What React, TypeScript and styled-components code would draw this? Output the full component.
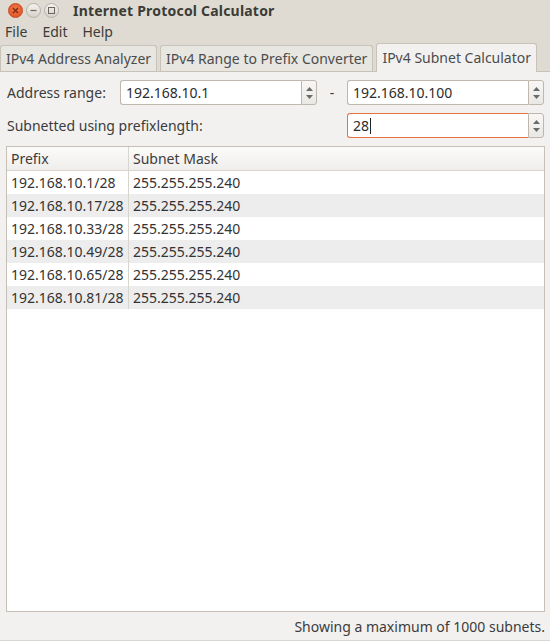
import React from "react";
import styled, { createGlobalStyle } from "styled-components";

const Global = createGlobalStyle`
  html, body { margin: 0; padding: 0; }
  body {
    width: 550px; height: 641px; overflow: hidden;
    font-family: "Noto Sans", "DejaVu Sans", sans-serif;
    font-size: 13px; color: #3c3c3c; background: #f2f1f0;
  }
  * { box-sizing: border-box; }
`;

const Window = styled.div`
  width: 550px; height: 641px; display: flex; flex-direction: column;
  background: #f2f1f0; border-bottom: 1px solid #dad7d2;
`;

const TitleBar = styled.div`
  height: 20px; display: flex; align-items: center; padding-left: 8px;
  background: #dfdbd2;
`;

const WinButtons = styled.div`
  display: flex; gap: 3px; align-items: center; width: 65px;
`;

const WinBtn = styled.div<{ $close?: boolean }>`
  width: 15px; height: 15px; border-radius: 50%;
  display: flex; align-items: center; justify-content: center;
  background: ${(p) => (p.$close ? "radial-gradient(circle at 50% 40%, #f47a4e, #dd4a1d)" : "linear-gradient(#f4f2ee, #d6d2ca)")};
  border: 1px solid ${(p) => (p.$close ? "#c24a22" : "#b7b1a7")};
`;

const Title = styled.div`
  font-weight: bold; font-size: 14px; color: #3c3b37; letter-spacing: 0.2px;
`;

const MenuBar = styled.div`
  height: 23px; display: flex; align-items: center; gap: 15px; padding-left: 5px;
  background: #dfdbd2; font-size: 14px; color: #3c3b37;
`;

const TabStrip = styled.div`
  display: flex; align-items: flex-end; gap: 3px; height: 29px;
  background: #dfdbd2; border-bottom: 1px solid #c8c2b8;
`;

const Tab = styled.div<{ $active?: boolean }>`
  height: ${(p) => (p.$active ? "29px" : "26px")};
  padding: 0 5px 0 5px; display: flex; align-items: center;
  font-size: 14px; color: #4c4c4c;
  background: ${(p) => (p.$active ? "#f2f1f0" : "#e8e6e1")};
  border: 1px solid #c8c2b8; border-bottom: none;
  border-radius: 3px 3px 0 0;
  margin-bottom: ${(p) => (p.$active ? "-1px" : "0")};
  padding-bottom: ${(p) => (p.$active ? "1px" : "0")};
`;

const Content = styled.div`
  flex: 1; display: flex; flex-direction: column; padding: 8px 5px 0 6px;
`;

const FormRow = styled.div`
  display: flex; align-items: center; height: 25px; margin-bottom: 8px;
`;

const Label = styled.div<{ $w: number }>`
  width: ${(p) => p.$w}px; flex-shrink: 0; font-size: 14px; color: #3c3c3c; padding-left: 1px;
`;

const Spin = styled.div<{ $w: number }>`
  width: ${(p) => p.$w}px; flex-shrink: 0; height: 25px; display: flex;
`;

const Field = styled.div<{ $focus?: boolean }>`
  flex: 1; display: flex; align-items: center; padding-left: 5px;
  background: #fff; font-size: 14px; color: #2c2c2c;
  border: 1px solid ${(p) => (p.$focus ? "#e9723f" : "#bdb7ae")};
  border-right: none; border-radius: 3px 0 0 3px;
`;

const Caret = styled.span`
  display: inline-block; width: 1px; height: 16px; background: #222; margin-left: 1px;
`;

const Arrows = styled.div`
  width: 16px; display: flex; flex-direction: column; align-items: center;
  justify-content: center; gap: 4px;
  background: linear-gradient(#f8f7f5, #eae8e4);
  border: 1px solid #bdb7ae; border-radius: 0 3px 3px 0;
`;

const Dash = styled.div`
  width: 30px; flex-shrink: 0; text-align: center; font-size: 14px;
`;

const Table = styled.div`
  flex: 1; display: flex; flex-direction: column;
  border: 1px solid #c7c0b6; background: #fff;
`;

const HeaderRow = styled.div`
  display: flex; height: 24px;
  background: linear-gradient(#fbfbfa, #efeeec);
  border-bottom: 1px solid #d8d4ce;
`;

const Cell = styled.div<{ $w?: number; $head?: boolean }>`
  ${(p) => (p.$w ? `width: ${p.$w}px;` : "flex: 1;")}
  display: flex; align-items: center; padding-left: 4px;
  font-size: 14px; color: ${(p) => (p.$head ? "#3c3c3c" : "#333")};
  ${(p) => (p.$w ? "border-right: 1px solid #d8d4ce;" : "")}
`;

const Row = styled.div<{ $alt?: boolean }>`
  display: flex; height: 23px; background: ${(p) => (p.$alt ? "#ededed" : "#fff")};
`;

const Status = styled.div`
  height: 28px; display: flex; align-items: center; justify-content: flex-end;
  font-size: 14px; padding-right: 0; color: #3c3c3c;
`;

const Tri = ({ up }: { up?: boolean }) => (
  <svg width="7" height="4" viewBox="0 0 7 4">
    <path d={up ? "M0 4 L3.5 0 L7 4 Z" : "M0 0 L3.5 4 L7 0 Z"} fill="#6a6a6a" />
  </svg>
);

const SpinBox = ({ w, value, focus }: { w: number; value: string; focus?: boolean }) => (
  <Spin $w={w}>
    <Field $focus={focus}>
      {value}
      {focus && <Caret />}
    </Field>
    <Arrows>
      <Tri up />
      <Tri />
    </Arrows>
  </Spin>
);

const rows = ["1", "17", "33", "49", "65", "81"];

export default function App() {
  return (
    <>
      <Global />
      <Window>
        <TitleBar>
          <WinButtons>
            <WinBtn $close>
              <svg width="7" height="7" viewBox="0 0 7 7">
                <path d="M1 1 L6 6 M6 1 L1 6" stroke="#7a2a10" strokeWidth="1.4" />
              </svg>
            </WinBtn>
            <WinBtn>
              <svg width="7" height="7" viewBox="0 0 7 7">
                <path d="M0.5 3.5 H6.5" stroke="#6b665e" strokeWidth="1.2" />
              </svg>
            </WinBtn>
            <WinBtn>
              <svg width="7" height="7" viewBox="0 0 7 7">
                <rect x="0.5" y="0.5" width="6" height="6" fill="none" stroke="#6b665e" strokeWidth="1" />
              </svg>
            </WinBtn>
          </WinButtons>
          <Title>Internet Protocol Calculator</Title>
        </TitleBar>
        <MenuBar>
          <span>File</span>
          <span>Edit</span>
          <span>Help</span>
        </MenuBar>
        <TabStrip>
          <Tab>IPv4 Address Analyzer</Tab>
          <Tab>IPv4 Range to Prefix Converter</Tab>
          <Tab $active>IPv4 Subnet Calculator</Tab>
        </TabStrip>
        <Content>
          <FormRow>
            <Label $w={114}>Address range:</Label>
            <SpinBox w={197} value="192.168.10.1" />
            <Dash>-</Dash>
            <SpinBox w={197} value="192.168.10.100" />
          </FormRow>
          <FormRow>
            <Label $w={341}>Subnetted using prefixlength:</Label>
            <SpinBox w={197} value="28" focus />
          </FormRow>
          <Table>
            <HeaderRow>
              <Cell $w={122} $head>Prefix</Cell>
              <Cell $head>Subnet Mask</Cell>
            </HeaderRow>
            {rows.map((r, i) => (
              <Row key={r} $alt={i % 2 === 1}>
                <Cell $w={122}>192.168.10.{r}/28</Cell>
                <Cell>255.255.255.240</Cell>
              </Row>
            ))}
          </Table>
          <Status>Showing a maximum of 1000 subnets.</Status>
        </Content>
      </Window>
    </>
  );
}
